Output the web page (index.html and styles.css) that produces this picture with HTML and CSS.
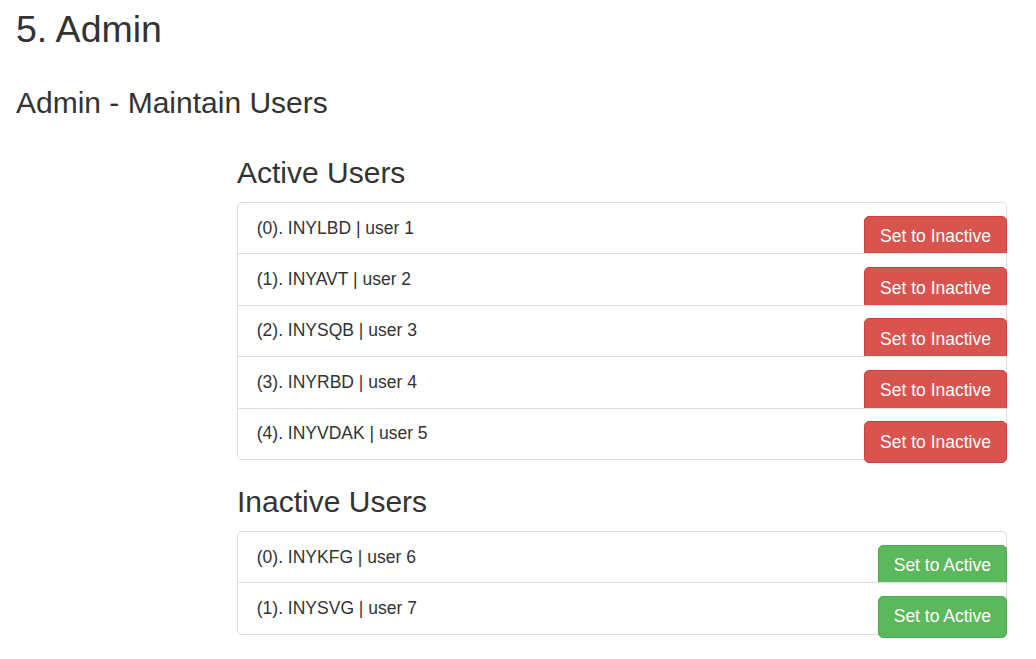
FILE: index.html
```html
<!DOCTYPE html>
<html lang="en">
<head>
<meta charset="utf-8">
<title>Admin</title>
<link rel="stylesheet" href="styles.css">
</head>
<body>
<div class="page">
  <h1 class="title">5. Admin</h1>
  <h2 class="subtitle">Admin - Maintain Users</h2>
  <div class="users">
    <h3 class="section-title">Active Users</h3>
    <ul class="list-group">
      <li class="list-item"><span class="item-text">(0). INYLBD | user 1</span><button class="btn btn-danger">Set to Inactive</button></li>
      <li class="list-item"><span class="item-text">(1). INYAVT | user 2</span><button class="btn btn-danger">Set to Inactive</button></li>
      <li class="list-item"><span class="item-text">(2). INYSQB | user 3</span><button class="btn btn-danger">Set to Inactive</button></li>
      <li class="list-item"><span class="item-text">(3). INYRBD | user 4</span><button class="btn btn-danger">Set to Inactive</button></li>
      <li class="list-item"><span class="item-text">(4). INYVDAK | user 5</span><button class="btn btn-danger">Set to Inactive</button></li>
    </ul>
    <h3 class="section-title">Inactive Users</h3>
    <ul class="list-group">
      <li class="list-item"><span class="item-text">(0). INYKFG | user 6</span><button class="btn btn-success">Set to Active</button></li>
      <li class="list-item"><span class="item-text">(1). INYSVG | user 7</span><button class="btn btn-success">Set to Active</button></li>
    </ul>
  </div>
</div>
</body>
</html>
```

FILE: styles.css
```css
html, body {
  margin: 0;
  padding: 0;
  background: #fff;
}

body {
  font-family: "Liberation Sans", Arial, Helvetica, sans-serif;
  font-size: 17.5px;
  line-height: 25px;
  color: #333;
}

.page {
  padding: 0 29px 0 16px;
}

.title {
  font-size: 37.5px;
  font-weight: 500;
  line-height: 1.1;
  margin: 9px 0 0;
}

.subtitle {
  font-size: 30px;
  font-weight: 500;
  line-height: 1.1;
  margin: 36px 0 0;
}

.users {
  margin-left: 221px;
  padding-top: 1px;
}

.section-title {
  font-size: 30px;
  font-weight: 500;
  line-height: 1.1;
  margin: 25px 0 13px;
}

.users > .section-title:first-child {
  margin-top: 35.75px;
}

.list-group {
  list-style: none;
  margin: 0 0 25px;
  padding: 0;
}

.list-item {
  position: relative;
  display: flex;
  align-items: flex-start;
  justify-content: space-between;
  padding: 12.7px 0 12.7px 18.75px;
  margin-bottom: -1px;
  background: #fff;
  border: 1px solid #ddd;
}

.list-item:first-child {
  border-top-left-radius: 5px;
  border-top-right-radius: 5px;
}

.list-item:last-child {
  margin-bottom: 0;
  border-bottom-left-radius: 5px;
  border-bottom-right-radius: 5px;
}

.item-text {
  line-height: 25px;
}

.btn {
  font-family: "Liberation Sans", Arial, Helvetica, sans-serif;
  font-size: 17.5px;
  line-height: 25px;
  padding: 7.5px 15px;
  margin: 0 -1px -17px 0;
  border: 1px solid transparent;
  border-radius: 5px;
  color: #fff;
  cursor: pointer;
  white-space: nowrap;
}

.btn-danger {
  background: #d9534f;
  border-color: #d43f3a;
}

.btn-success {
  background: #5cb85c;
  border-color: #4cae4c;
}
```
